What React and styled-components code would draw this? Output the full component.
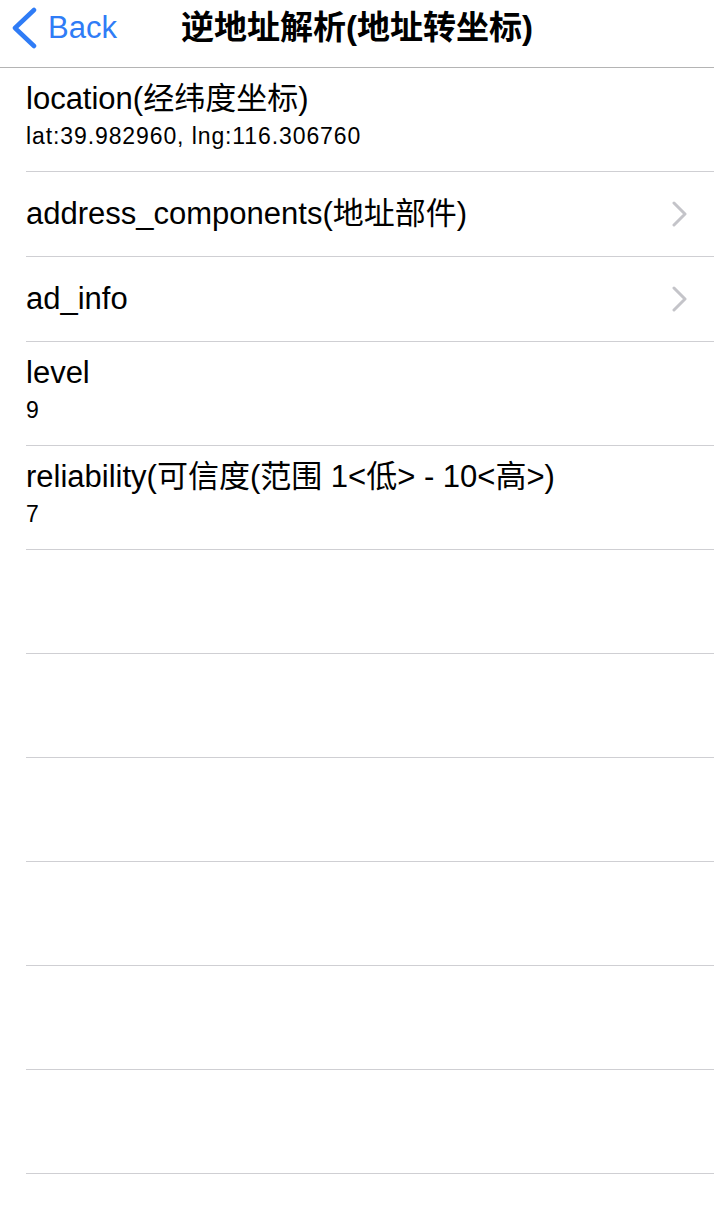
import styled, { createGlobalStyle } from 'styled-components';

const GlobalStyle = createGlobalStyle`
  html, body {
    margin: 0;
    padding: 0;
    background: #fff;
  }
  body {
    font-family: "Liberation Sans", "Noto Sans CJK SC", sans-serif;
    color: #000;
  }
`;

const Page = styled.div`
  width: 714px;
  height: 1224px;
  overflow: hidden;
  background: #fff;
`;

const NavBar = styled.header`
  height: 56px;
  padding-bottom: 11px;
  border-bottom: 1px solid #b4b4b4;
  display: grid;
  grid-template-columns: 1fr auto 1fr;
  align-items: center;
  background: #fff;
`;

const BackButton = styled.button`
  justify-self: start;
  display: flex;
  align-items: center;
  gap: 10px;
  margin: 0;
  padding: 0 0 0 12px;
  border: 0;
  background: none;
  color: #2f7cf6;
  font-family: "Liberation Sans", sans-serif;
  font-size: 31px;
  line-height: 38px;
  cursor: pointer;
`;

const Title = styled.h1`
  margin: 0;
  font-family: "Liberation Sans", "Noto Sans CJK SC", sans-serif;
  font-size: 33px;
  font-weight: 700;
  line-height: 40px;
  white-space: nowrap;
`;

const Row = styled.div`
  margin-left: 26px;
  height: ${({ $tall }) => ($tall ? '103px' : '84px')};
  border-bottom: 1px solid #cfcfd3;
  display: flex;
  align-items: ${({ $tall }) => ($tall ? 'flex-start' : 'center')};
  padding-right: 26px;
  box-sizing: content-box;
`;

const Texts = styled.div`
  flex: 1;
  display: flex;
  flex-direction: column;
  padding-top: ${({ $tall }) => ($tall ? '12px' : '0')};
`;

const Label = styled.div`
  font-size: 31px;
  line-height: 38px;
  white-space: nowrap;
`;

const Detail = styled.div`
  margin-top: 4px;
  font-family: "Liberation Sans", sans-serif;
  font-size: 23px;
  letter-spacing: 0.9px;
  line-height: 28px;
`;

const Chevron = () => (
  <svg width="16" height="26" viewBox="0 0 16 26" fill="none">
    <polyline
      points="2,2 13,13 2,24"
      stroke="#c4c4c9"
      strokeWidth="3"
      strokeLinecap="round"
      strokeLinejoin="round"
    />
  </svg>
);

const BackArrow = () => (
  <svg width="26" height="42" viewBox="0 0 26 42" fill="none">
    <polyline
      points="22,3 3,21 22,39"
      stroke="#2f7cf6"
      strokeWidth="4.5"
      strokeLinecap="round"
      strokeLinejoin="round"
    />
  </svg>
);

const items = [
  { label: 'location(经纬度坐标)', detail: 'lat:39.982960, lng:116.306760' },
  { label: 'address_components(地址部件)', more: true },
  { label: 'ad_info', more: true },
  { label: 'level', detail: '9' },
  { label: 'reliability(可信度(范围 1<低> - 10<高>)', detail: '7' },
];

export default function App() {
  return (
    <Page>
      <GlobalStyle />
      <NavBar>
        <BackButton>
          <BackArrow />
          Back
        </BackButton>
        <Title>逆地址解析(地址转坐标)</Title>
        <div />
      </NavBar>
      {items.map((item) => (
        <Row key={item.label} $tall={!!item.detail}>
          <Texts $tall={!!item.detail}>
            <Label>{item.label}</Label>
            {item.detail && <Detail>{item.detail}</Detail>}
          </Texts>
          {item.more && <Chevron />}
        </Row>
      ))}
      {Array.from({ length: 7 }).map((_, i) => (
        <Row key={i} $tall />
      ))}
    </Page>
  );
}
